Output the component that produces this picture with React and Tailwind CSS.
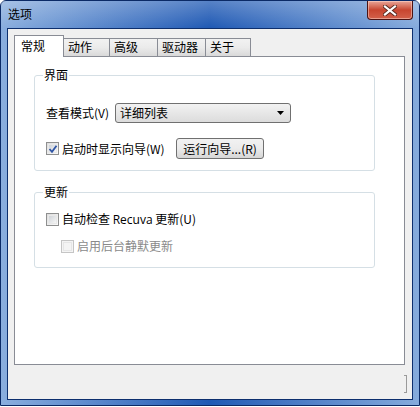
import React from "react";

const font = { fontFamily: '"Noto Sans CJK SC", "Noto Sans", sans-serif' };

function Checkbox({ checked, disabled }) {
  return (
    <span
      className={
        "relative inline-flex h-[13px] w-[13px] shrink-0 items-center justify-center border " +
        (disabled ? "border-[#c5c5c5] bg-[#f4f4f4]" : "border-[#8e8f8f] bg-gradient-to-br from-[#dcdcdc] to-[#fbfbfb]")
      }
    >
      <span className={"h-[9px] w-[9px] border " + (disabled ? "border-[#e6e6e6]" : "border-[#e8e8e8] bg-gradient-to-br from-[#cfd3d8] to-[#f6f6f6]")}></span>
      {checked ? (
        <svg className="absolute left-[1px] top-[1px]" width="10" height="10" viewBox="0 0 10 10">
          <path d="M1.5 5 L4 7.8 L8.5 1.8" fill="none" stroke="#2f55a5" strokeWidth="1.8" />
        </svg>
      ) : null}
    </span>
  );
}

function GroupBox({ label, className, children }) {
  return (
    <div className={"relative rounded-[3px] border border-[#d5dfe5] " + className}>
      <span className="absolute left-[8px] top-[-8px] bg-white px-[1px] text-[12px] leading-[14px] text-black">
        {label}
      </span>
      {children}
    </div>
  );
}

export default function App() {
  const tabs = ["动作", "高级", "驱动器", "关于"];
  const tabWidths = ["w-[46px]", "w-[48px]", "w-[48px]", "w-[45px]"];
  return (
    <div style={font} className="h-[407px] w-[420px] bg-white text-[12px] text-black">
      <div className="flex h-[406px] w-[420px] flex-col rounded-t-[6px] border border-[#0b2a66] bg-gradient-to-r from-[#8aaede] via-[#1f59b4] to-[#86abdc]">
        {/* title bar */}
        <div className="flex h-[27px] shrink-0 items-start justify-between bg-gradient-to-b from-white/25 to-transparent">
          <span className="ml-[7px] mt-[5px] text-[12px] leading-[16px] text-black">选项</span>
          <div className="mr-[6px] flex h-[19px] w-[46px] items-center justify-center rounded-b-[4px] border border-t-0 border-[#4b1313] bg-gradient-to-b from-[#e8a598] via-[#c8452f] to-[#d3604a] shadow-[inset_0_0_0_1px_rgba(255,220,210,0.5)]">
            <svg width="14" height="11" viewBox="0 0 14 11">
              <path d="M2 1.5 L12 9.5 M12 1.5 L2 9.5" stroke="#5a2a20" strokeWidth="4" strokeLinecap="square" />
              <path d="M2 1.5 L12 9.5 M12 1.5 L2 9.5" stroke="#ffffff" strokeWidth="2.2" strokeLinecap="square" />
            </svg>
          </div>
        </div>
        {/* client frame */}
        <div className="mx-[6px] mb-[6px] flex flex-1 flex-col border border-[#0d2f6e] bg-[#f0f0f0]">
          <div className="ml-[6px] mr-[7px] mt-[6px] flex flex-col">
            {/* tabs */}
            <div className="flex h-[21px] items-end">
              <div className="relative z-10 mb-[-1px] flex h-[22px] w-[50px] items-start border border-b-0 border-[#898c95] bg-white pl-[6px] pt-[3px] leading-[14px]">
                常规
              </div>
              {tabs.map((t, i) => (
                <div
                  key={t}
                  className={
                    "flex h-[18px] items-start border border-b-0 border-l-0 border-[#898c95] bg-gradient-to-b from-[#f2f2f2] via-[#ebebeb] to-[#d9d9d9] pl-[4px] pt-[1px] leading-[14px] " +
                    tabWidths[i]
                  }
                >
                  {t}
                </div>
              ))}
            </div>
            {/* panel */}
            <div className="flex h-[309px] flex-col border border-[#898c95] bg-white px-[19px] pt-[18px]">
              <GroupBox label="界面" className="h-[96px] w-[341px]">
                <div className="ml-[11px] mt-[27px] flex h-[20px] items-center">
                  <span className="w-[69px] leading-[14px]">查看模式(V)</span>
                  <div className="flex h-[20px] w-[176px] items-center justify-between rounded-[3px] border border-[#707070] bg-gradient-to-b from-[#f2f2f2] to-[#dcdcdc] pl-[4px] pr-[6px]">
                    <span className="leading-[14px]">详细列表</span>
                    <svg width="7" height="4" viewBox="0 0 7 4">
                      <path d="M0 0 H7 L3.5 4 Z" fill="#000" />
                    </svg>
                  </div>
                </div>
                <div className="ml-[11px] mt-[15px] flex h-[21px] items-center">
                  <Checkbox checked />
                  <span className="ml-[3px] w-[114px] leading-[14px]">启动时显示向导(W)</span>
                  <div className="flex h-[21px] w-[88px] items-center justify-center rounded-[3px] border border-[#707070] bg-gradient-to-b from-[#f2f2f2] via-[#ebebeb] to-[#d6d6d6] leading-[14px]">
                    运行向导...(R)
                  </div>
                </div>
              </GroupBox>
              <GroupBox label="更新" className="mt-[21px] h-[76px] w-[341px]">
                <div className="ml-[11px] mt-[18px] flex h-[16px] items-center">
                  <Checkbox />
                  <span className="ml-[3px] leading-[14px]">
                    自动检查 <span style={{ fontFamily: '"Open Sans", "Noto Sans", sans-serif' }} className="text-[12px]">Recuva</span> 更新(U)
                  </span>
                </div>
                <div className="ml-[26px] mt-[11px] flex h-[16px] items-center">
                  <Checkbox disabled />
                  <span className="ml-[3px] leading-[14px] text-[#8a8a8a]">启用后台静默更新</span>
                </div>
              </GroupBox>
            </div>
            {/* size grip */}
            <div className="flex h-[34px] items-end justify-end pb-[6px]">
              <div className="mr-[-2px] h-[18px] w-[3px] border border-l-0 border-[#9a9a9a]"></div>
            </div>
          </div>
        </div>
      </div>
    </div>
  );
}
